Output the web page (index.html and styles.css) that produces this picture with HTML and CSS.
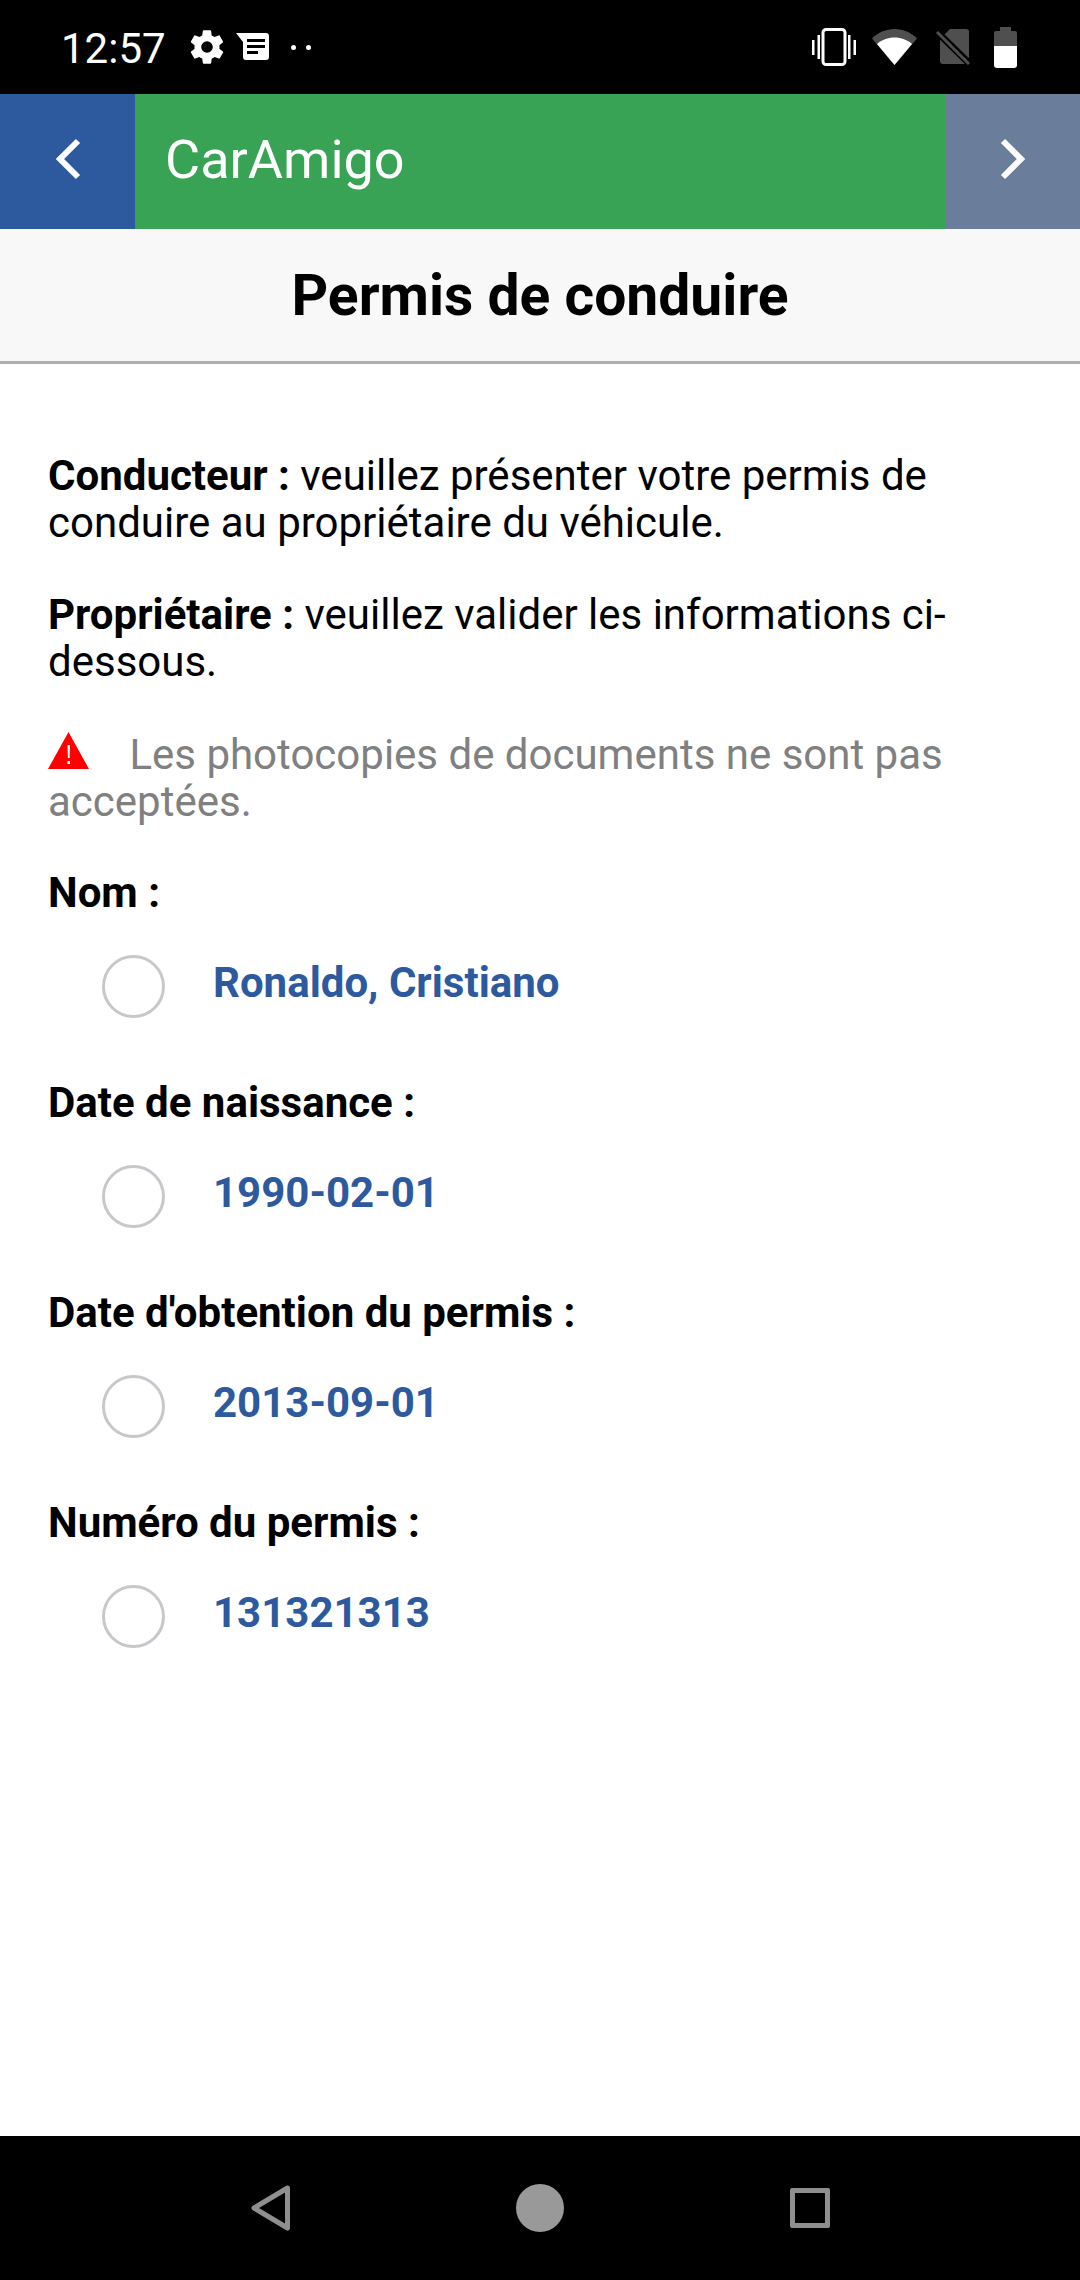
FILE: index.html
```html
<!DOCTYPE html>
<html lang="fr">
<head>
    <meta charset="UTF-8">
    <meta name="viewport" content="width=device-width, initial-scale=1.0">
    <title>Permis de conduire</title>
    <link rel="stylesheet" href="styles.css">
</head>
<body>
    <div class="status-bar">
        <span class="clock">12:57</span>
        <svg class="ico-gear" viewBox="0 0 24 24"><path fill="#fff" d="M19.4 13c.04-.32.07-.66.07-1s-.03-.68-.07-1l2.1-1.65c.2-.15.25-.42.12-.64l-2-3.46c-.12-.22-.38-.3-.61-.22l-2.49 1c-.52-.4-1.08-.73-1.69-.98l-.38-2.65A.49.49 0 0 0 14 2h-4c-.25 0-.46.18-.49.42l-.38 2.65c-.61.25-1.17.59-1.69.98l-2.49-1c-.23-.09-.49 0-.61.22l-2 3.46c-.13.22-.07.49.12.64L4.57 11c-.04.32-.07.66-.07 1s.03.68.07 1l-2.11 1.65c-.19.15-.24.42-.12.64l2 3.46c.12.22.39.3.61.22l2.49-1c.52.4 1.08.73 1.69.98l.38 2.65c.03.24.24.42.49.42h4c.25 0 .46-.18.49-.42l.38-2.65c.61-.25 1.17-.59 1.69-.98l2.49 1c.23.09.49 0 .61-.22l2-3.46c.12-.22.07-.49-.12-.64L19.4 13zM12 15.5a3.5 3.5 0 1 1 0-7 3.5 3.5 0 0 1 0 7z"/></svg>
        <svg class="ico-msg" viewBox="0 0 33 27"><path fill="#fff" d="M0 0h30a3 3 0 0 1 3 3v21a3 3 0 0 1-3 3H10a3 3 0 0 1-3-3V9z"/><path fill="#000" d="M11 6h18v3H11zM11 12h18v3H11zM11 18h11v3H11z"/></svg>
        <span class="dots"><i></i><i></i></span>
        <span class="status-right">
            <svg class="ico-vibrate" viewBox="0 0 44 38"><rect x="11" y="1.500" width="22" height="35" rx="3" fill="none" stroke="#fff" stroke-width="3"/><path fill="#fff" d="M0 12h2.500v15H0zM5.500 7h2.500v24H5.500zM36 7h2.500v24H36zM41.500 12H44v15h-2.500z"/></svg>
            <svg class="ico-wifi" viewBox="0 0 45 36"><path fill="#4f4f4f" d="M0 9.500C6 3.500 14 0 22.500 0S39 3.500 45 9.500L22.500 36z"/><path fill="#fff" d="M5 15c4.500-4 11-6.500 17.500-6.500S35.500 11 40 15L22.500 36z"/></svg>
            <svg class="ico-sim" viewBox="0 0 34 36"><path fill="#4f4f4f" d="M14 0h16a3 3 0 0 1 3 3v29a3 3 0 0 1-3 3H7a3 3 0 0 1-3-3V10z"/><path stroke="#000" stroke-width="7" d="M-2 0l38 37"/><path stroke="#4f4f4f" stroke-width="3" d="M1 3l32 32"/></svg>
            <svg class="ico-batt" viewBox="0 0 23 41"><path fill="#4f4f4f" d="M6 0h11v4h4a2 2 0 0 1 2 2v13H0V6a2 2 0 0 1 2-2h4z"/><path fill="#fff" d="M0 19h23v19a3 3 0 0 1-3 3H3a3 3 0 0 1-3-3z"/></svg>
        </span>
    </div>

    <div class="app-bar">
        <div class="nav-btn prev">
            <svg viewBox="0 0 26 42"><path d="M23 3L5 21l18 18" fill="none" stroke="#fff" stroke-width="6"/></svg>
        </div>
        <div class="brand">CarAmigo</div>
        <div class="nav-btn next">
            <svg viewBox="0 0 26 42"><path d="M3 3l18 18L3 39" fill="none" stroke="#fff" stroke-width="6"/></svg>
        </div>
    </div>

    <h1 class="page-title">Permis de conduire</h1>

    <main class="content">
        <p class="intro"><strong>Conducteur :</strong> veuillez présenter votre permis de conduire au propriétaire du véhicule.</p>
        <p class="intro"><strong>Propriétaire :</strong> veuillez valider les informations ci-dessous.</p>
        <p class="intro warning">
            <svg class="ico-warn" viewBox="0 0 41 37"><path fill="#f00" d="M20.500 0L41 37H0z"/><path fill="#fff" d="M19.500 13h2.500l-.4 13h-1.700zM19.500 29h2.500v3h-2.500z"/></svg>
            Les photocopies de documents ne sont pas acceptées.
        </p>

        <div class="field">
            <div class="field-label">Nom :</div>
            <div class="field-row"><span class="radio"></span><span class="field-value">Ronaldo, Cristiano</span></div>
        </div>
        <div class="field">
            <div class="field-label">Date de naissance :</div>
            <div class="field-row"><span class="radio"></span><span class="field-value">1990-02-01</span></div>
        </div>
        <div class="field">
            <div class="field-label">Date d'obtention du permis :</div>
            <div class="field-row"><span class="radio"></span><span class="field-value">2013-09-01</span></div>
        </div>
        <div class="field">
            <div class="field-label">Numéro du permis :</div>
            <div class="field-row"><span class="radio"></span><span class="field-value">131321313</span></div>
        </div>
    </main>

    <div class="bottom-nav">
        <svg class="ico-back" viewBox="0 0 40 46"><path d="M36.500 3L3 23l33.500 20z" fill="none" stroke="#8f8f8f" stroke-width="5" stroke-linejoin="round"/></svg>
        <span class="home"></span>
        <span class="recents"></span>
    </div>
</body>
</html>
```

FILE: styles.css
```css
* {
    box-sizing: border-box;
}
body {
    margin: 0;
    width: 1080px;
    height: 2280px;
    display: flex;
    flex-direction: column;
    background: #fff;
    font-family: Roboto, sans-serif;
    color: #000;
}
svg {
    display: block;
    flex: none;
}

/* status bar */
.status-bar {
    height: 94px;
    background: #000;
    display: flex;
    align-items: center;
    padding-left: 61px;
}
.clock {
    color: #fff;
    font-size: 42px;
    width: 130px;
    line-height: 94px;
    padding-top: 3px;
}
.ico-gear {
    width: 40px;
    height: 40px;
    margin-right: 9px;
    margin-left: -4px;
    margin-top: -1px;
}
.ico-msg {
    width: 33px;
    height: 27px;
    margin-top: -1px;
}
.dots {
    display: flex;
    gap: 10px;
    margin-left: 22px;
}
.dots i {
    width: 5px;
    height: 5px;
    border-radius: 50%;
    background: #fff;
}
.status-right {
    margin-left: auto;
    display: flex;
    align-items: center;
    padding-right: 63px;
}
.ico-vibrate { width: 44px; height: 38px; margin-right: 16px; }
.ico-wifi { width: 45px; height: 36px; margin-right: 19px; }
.ico-sim { width: 34px; height: 36px; margin-right: 24px; }
.ico-batt { width: 23px; height: 41px; }

/* app bar */
.app-bar {
    height: 135px;
    display: flex;
    background: #38a354;
}
.nav-btn {
    width: 135px;
    display: flex;
    align-items: center;
    justify-content: center;
}
.nav-btn svg {
    width: 26px;
    height: 42px;
    margin-top: -6px;
}
.prev { background: #2d5a9e; }
.next { background: #6a7d9a; }
.brand {
    flex: 1;
    padding-left: 30px;
    color: #fff;
    font-size: 54px;
    font-weight: 400;
    line-height: 131px;
}

.page-title {
    margin: 0;
    height: 135px;
    background: #f8f8f8;
    border-bottom: 3px solid #aeaeae;
    text-align: center;
    font-size: 57px;
    font-weight: 700;
    line-height: 134px;
}

/* content */
.content {
    flex: 1;
    padding: 88px 48px 0;
}
.intro {
    margin: 0 0 45px;
    font-size: 42px;
    line-height: 47px;
}
.intro strong {
    font-weight: 700;
}
.warning {
    color: #808080;
    margin-top: 46px;
    margin-bottom: 44px;
}
.ico-warn {
    display: inline-block;
    width: 41px;
    height: 37px;
    margin-right: 30px;
}
.field {
    margin-bottom: 30px;
}
.field-label {
    font-size: 42px;
    line-height: 47px;
    font-weight: 700;
}
.field-row {
    display: flex;
    align-items: flex-start;
    height: 133px;
    padding: 39px 0 0 54px;
}
.radio {
    width: 63px;
    height: 63px;
    border: 3px solid #c8c8cc;
    border-radius: 50%;
    background: #fff;
}
.field-value {
    margin-left: 48px;
    padding-top: 4px;
    color: #2d5a9e;
    font-size: 42px;
    font-weight: 700;
    line-height: 47px;
}

/* bottom nav */
.bottom-nav {
    height: 144px;
    background: #000;
    position: relative;
}
.ico-back {
    position: absolute;
    left: 251px;
    top: 49px;
    width: 40px;
    height: 46px;
}
.home {
    position: absolute;
    left: 516px;
    top: 48px;
    width: 48px;
    height: 48px;
    border-radius: 50%;
    background: #999;
}
.recents {
    position: absolute;
    left: 790px;
    top: 52px;
    width: 40px;
    height: 40px;
    border: 5px solid #8f8f8f;
    border-radius: 2px;
}
```
